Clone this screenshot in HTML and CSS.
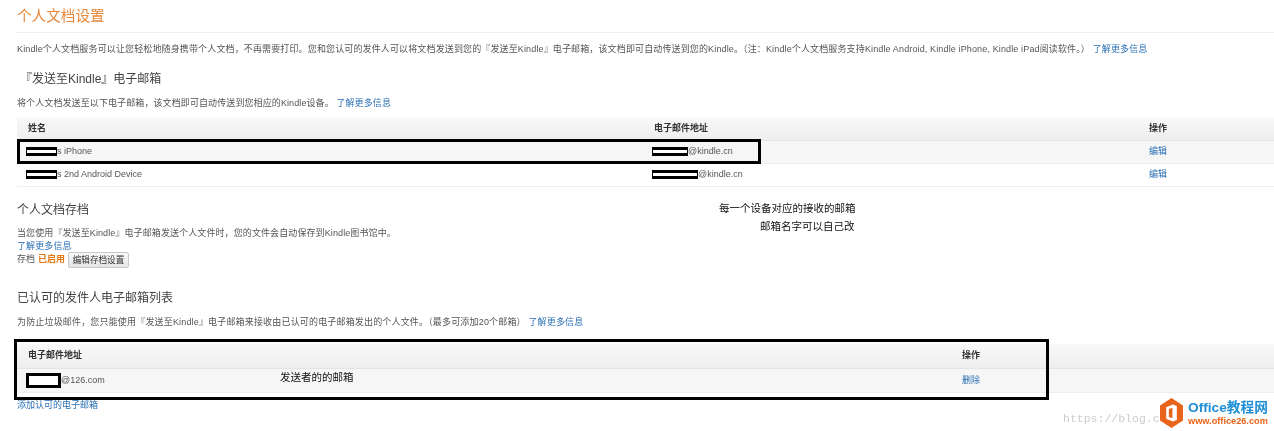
FILE: index.html
```html
<!DOCTYPE html>
<html lang="zh">
<head>
<meta charset="utf-8">
<title>个人文档设置</title>
<link rel="stylesheet" href="styles.css">
</head>
<body>
<main class="page">
  <h1 class="title">个人文档设置</h1>
  <p class="intro">Kindle个人文档服务可以让您轻松地随身携带个人文档，不再需要打印。您和您认可的发件人可以将文档发送到您的『发送至Kindle』电子邮箱，该文档即可自动传送到您的Kindle。（注：Kindle个人文档服务支持Kindle Android, Kindle iPhone, Kindle iPad阅读软件。） <a href="#">了解更多信息</a></p>

  <h2 class="head head-send">『发送至Kindle』电子邮箱</h2>
  <p class="desc desc-send">将个人文档发送至以下电子邮箱，该文档即可自动传送到您相应的Kindle设备。 <a href="#">了解更多信息</a></p>
  <table class="grid grid-devices">
    <thead><tr><th class="c-name">姓名</th><th class="c-mail">电子邮件地址</th><th>操作</th></tr></thead>
    <tbody>
      <tr class="alt"><td><span class="mask m-31"></span>s iPhone</td><td><span class="mask mask-mail m-36"></span>@kindle.cn</td><td><a href="#">编辑</a></td></tr>
      <tr><td><span class="mask m-31"></span>s 2nd Android Device</td><td><span class="mask mask-mail m-46"></span>@kindle.cn</td><td><a href="#">编辑</a></td></tr>
    </tbody>
  </table>

  <h2 class="head head-archive">个人文档存档</h2>
  <p class="desc desc-archive">当您使用『发送至Kindle』电子邮箱发送个人文件时，您的文件会自动保存到Kindle图书馆中。<br><a href="#">了解更多信息</a></p>
  <div class="status"><span>存档</span><strong>已启用</strong><button class="btn" type="button">编辑存档设置</button></div>

  <h2 class="head head-list">已认可的发件人电子邮箱列表</h2>
  <p class="desc desc-list">为防止垃圾邮件，您只能使用『发送至Kindle』电子邮箱来接收由已认可的电子邮箱发出的个人文件。（最多可添加20个邮箱） <a href="#">了解更多信息</a></p>
  <table class="grid grid-senders">
    <thead><tr><th class="c-sender">电子邮件地址</th><th>操作</th></tr></thead>
    <tbody>
      <tr class="alt"><td><span class="mask mask-thick"></span>@126.com</td><td><a href="#">删除</a></td></tr>
    </tbody>
  </table>
  <p class="add"><a href="#">添加认可的电子邮箱</a></p>
</main>

<div class="box box-one"></div>
<div class="box box-two"></div>
<p class="note note-a">每一个设备对应的接收的邮箱</p>
<p class="note note-b">邮箱名字可以自己改</p>
<p class="note note-c">发送者的的邮箱</p>

<div class="mark">
  <span class="mark-url">https://blog.c</span>
  <svg class="mark-logo" viewBox="0 0 26 30" preserveAspectRatio="none" aria-hidden="true">
    <path d="M13 0 26 7.5V22.5L13 30 0 22.5V7.5Z" fill="#e8641b"/>
    <path d="M14.5 6.5 7 9.2V20.8L14.5 23.5 19 22V8Z" fill="#fff"/>
    <path d="M14 9.8 10 11V19L14 20.2Z" fill="#e8641b"/>
  </svg>
  <div class="mark-text"><b>Office教程网</b><i>www.office26.com</i></div>
</div>
</body>
</html>
```
FILE: styles.css
```css
* { box-sizing: border-box; }
html, body { margin: 0; padding: 0; }
body {
  width: 1274px;
  height: 431px;
  overflow: hidden;
  background: #fff;
  color: #555;
  font-family: "Liberation Sans", "Noto Sans CJK SC", sans-serif;
  font-size: 9px;
  line-height: 13px;
  position: relative;
  filter: blur(0.35px);
}
a { color: #2a6fb5; text-decoration: none; }
p, h1, h2 { margin: 0; font-weight: 400; }

.page { padding: 7px 0 0 17px; }
.title {
  color: #e8883a;
  font-size: 14.6px;
  line-height: 19px;
  height: 26px;
  border-bottom: 1px solid #eee;
}
.intro { margin-top: 10px; white-space: nowrap; letter-spacing: 0.135px; }
.head { font-size: 12px; line-height: 16px; color: #444; }
.head-send { margin-top: 15px; margin-left: 3px; }
.head-archive { margin-top: 15px; }
.head-list { margin-top: 22px; }
.desc { white-space: nowrap; letter-spacing: 0.1px; }
.desc-send { margin-top: 10px; }
.desc-archive { margin-top: 9px; }
.desc-list { margin-top: 10px; letter-spacing: 0.17px; }

.grid { border-collapse: collapse; table-layout: fixed; width: 1257px; }
.grid-devices { margin-top: 7px; }
.grid-senders { margin-top: 15px; }
.grid th {
  height: 23px;
  padding: 0 0 0 11px;
  text-align: left;
  color: #333;
  font-weight: 700;
  background: linear-gradient(#f9f9f9, #eeeeee);
  border-bottom: 1px solid #e4e4e4;
}
.grid-senders th { height: 25px; }
.grid td {
  height: 23px;
  padding: 0 0 0 11px;
  border-bottom: 1px solid #eee;
}
.grid-senders td { height: 24px; }
.grid .alt td { background: #f6f6f6; }
.grid td:first-child { padding-left: 9px; }
.c-name { width: 626px; }
.c-mail { width: 495px; }
.c-sender { width: 934px; }

.mask {
  display: inline-block;
  height: 9px;
  border: 3px solid #000;
  border-width: 3px 1px;
  background: #fff;
  vertical-align: middle;
}
.mask-mail { margin-left: -2px; }
.m-31 { width: 31px; }
.m-36 { width: 36px; }
.m-46 { width: 46px; }
.mask-thick { width: 35px; height: 15px; border-width: 3px; }

.status { display: flex; align-items: center; gap: 3px; height: 16px; margin-top: -1px; }
.status strong { color: #e47911; font-weight: 700; }
.btn {
  height: 16px;
  width: 61px;
  margin: 0;
  padding: 0;
  font-family: inherit;
  font-size: 8.6px;
  line-height: 14px;
  color: #333;
  background: linear-gradient(#f8f8f8, #e6e6e6);
  border: 1px solid #c8c8c8;
  border-radius: 2px;
}
.add { margin-top: 6px; }

.box { position: absolute; border: 3px solid #000; }
.box-one { left: 17px; top: 139px; width: 744px; height: 25px; }
.box-two { left: 14px; top: 339px; width: 1035px; height: 61px; }

.note { position: absolute; color: #111; font-size: 10.5px; line-height: 14px; white-space: nowrap; }
.note-a { left: 719px; top: 201px; }
.note-b { left: 760px; top: 219px; }
.note-c { left: 280px; top: 370px; }

.mark { position: absolute; left: 1063px; top: 398px; display: flex; align-items: center; }
.mark-url {
  width: 97px;
  overflow: hidden;
  margin-top: 11px;
  color: #ccc;
  font-family: "Liberation Mono", monospace;
  font-size: 11.5px;
  white-space: nowrap;
}
.mark-logo { flex: none; width: 23px; height: 30px; }
.mark-text { margin-left: 5px; display: flex; flex-direction: column; }
.mark-text b { color: #1f8fd8; font-size: 13.7px; line-height: 17px; white-space: nowrap; }
.mark-text i { color: #e8641b; font-size: 9.2px; line-height: 11px; font-style: normal; font-weight: 700; white-space: nowrap; }
```
